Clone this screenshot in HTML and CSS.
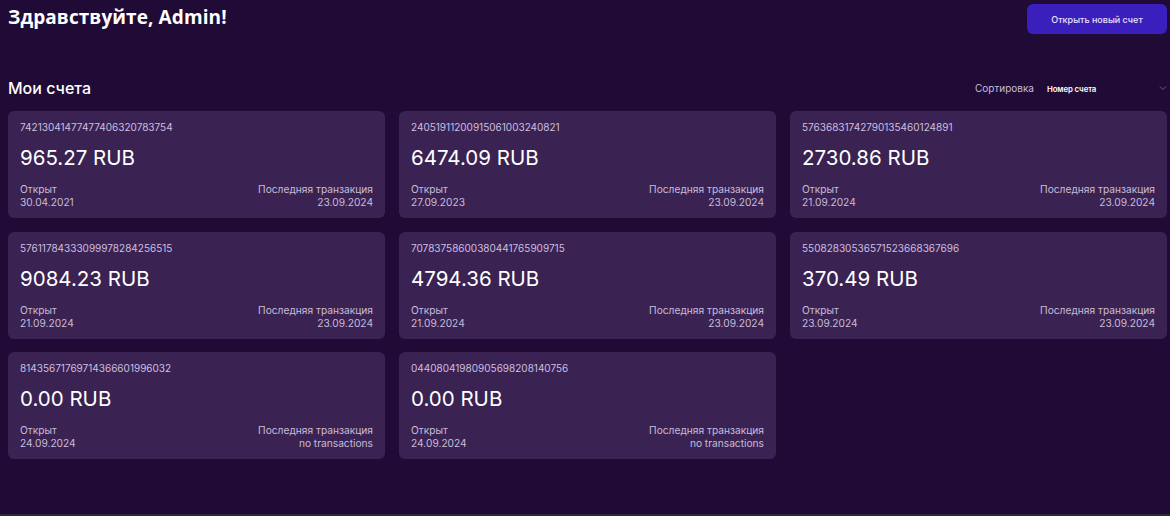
FILE: index.html
```html
<!DOCTYPE html>
<html lang="ru">
<head>
<meta charset="utf-8">
<title>Счета</title>
<link rel="stylesheet" href="styles.css">
</head>
<body>
<div class="page">
  <header class="top">
    <h1 class="greet">Здравствуйте, Admin!</h1>
    <button class="btn-new">Открыть новый счет</button>
  </header>
  <div class="section-head">
    <h2 class="section-title">Мои счета</h2>
    <div class="sort">
      <span class="sort-label">Сортировка</span>
      <span class="sort-value">Номер счета</span>
      <svg class="chev" width="8" height="6" viewBox="0 0 8 6"><path d="M1 1.5 L4 4.5 L7 1.5" fill="none" stroke="#6d5a85" stroke-width="1"/></svg>
    </div>
  </div>
  <div class="grid">
    <div class="card"><div class="num">74213041477477406320783754</div><div class="amt">965.27 RUB</div><div class="meta"><div><div>Открыт</div><div>30.04.2021</div></div><div class="r"><div>Последняя транзакция</div><div>23.09.2024</div></div></div></div>
    <div class="card"><div class="num">24051911200915061003240821</div><div class="amt">6474.09 RUB</div><div class="meta"><div><div>Открыт</div><div>27.09.2023</div></div><div class="r"><div>Последняя транзакция</div><div>23.09.2024</div></div></div></div>
    <div class="card"><div class="num">57636831742790135460124891</div><div class="amt">2730.86 RUB</div><div class="meta"><div><div>Открыт</div><div>21.09.2024</div></div><div class="r"><div>Последняя транзакция</div><div>23.09.2024</div></div></div></div>
    <div class="card"><div class="num">57611784333099978284256515</div><div class="amt">9084.23 RUB</div><div class="meta"><div><div>Открыт</div><div>21.09.2024</div></div><div class="r"><div>Последняя транзакция</div><div>23.09.2024</div></div></div></div>
    <div class="card"><div class="num">70783758600380441765909715</div><div class="amt">4794.36 RUB</div><div class="meta"><div><div>Открыт</div><div>21.09.2024</div></div><div class="r"><div>Последняя транзакция</div><div>23.09.2024</div></div></div></div>
    <div class="card"><div class="num">55082830536571523668367696</div><div class="amt">370.49 RUB</div><div class="meta"><div><div>Открыт</div><div>23.09.2024</div></div><div class="r"><div>Последняя транзакция</div><div>23.09.2024</div></div></div></div>
    <div class="card"><div class="num">81435671769714366601996032</div><div class="amt">0.00 RUB</div><div class="meta"><div><div>Открыт</div><div>24.09.2024</div></div><div class="r"><div>Последняя транзакция</div><div>no transactions</div></div></div></div>
    <div class="card"><div class="num">04408041980905698208140756</div><div class="amt">0.00 RUB</div><div class="meta"><div><div>Открыт</div><div>24.09.2024</div></div><div class="r"><div>Последняя транзакция</div><div>no transactions</div></div></div></div>
  </div>
</div>
</body>
</html>
```
FILE: styles.css
```css
html, body {
  margin: 0;
  padding: 0;
  height: 100%;
}
body {
  background: #200b36;
  font-family: "Inter", "Noto Sans", sans-serif;
  color: #fff;
  box-sizing: border-box;
  border-bottom: 2px solid #2b2b2b;
}
.page {
  padding: 4px 3px 0 8px;
}
.top {
  display: flex;
  justify-content: space-between;
  align-items: flex-start;
}
.greet {
  margin: 1px 0 0 0;
  font-size: 19px;
  font-weight: 700;
  line-height: 24px;
  font-family: "Open Sans", "Noto Sans", sans-serif;
  letter-spacing: 0.1px;
}
.btn-new {
  width: 140px;
  height: 30px;
  background: #3b1fbd;
  color: #e6e0ff;
  border: none;
  border-radius: 6px;
  font-family: "Inter", sans-serif;
  font-size: 9px;
  font-weight: 500;
  cursor: pointer;
}
.section-head {
  display: flex;
  justify-content: space-between;
  align-items: center;
  margin-top: 41px;
  height: 26px;
}
.section-title {
  margin: 0;
  font-size: 16px;
  font-weight: 500;
  line-height: 20px;
}
.sort {
  display: flex;
  align-items: center;
  font-size: 10px;
  width: 192px;
}
.sort-label {
  color: #c9bcd9;
  margin-right: 13px;
}
.sort-value {
  color: #fff;
  font-weight: 600;
  font-size: 7.8px;
  letter-spacing: -0.1px;
  flex: 1;
  padding-top: 2px;
}
.grid {
  display: grid;
  grid-template-columns: repeat(3, 377px);
  column-gap: 14px;
  row-gap: 13.5px;
  margin-top: 10px;
}
.card {
  background: #3a2352;
  border-radius: 6px;
  height: 107px;
  box-sizing: border-box;
  padding: 10px 12px 0 12px;
  display: flex;
  flex-direction: column;
}
.num {
  font-size: 10px;
  color: #cdbfe0;
  line-height: 13px;
}
.amt {
  font-size: 20.5px;
  line-height: 24px;
  margin-top: 12px;
  color: #fff;
}
.meta {
  display: flex;
  justify-content: space-between;
  margin-top: 13px;
  font-size: 10.2px;
  line-height: 13px;
  color: #c9bcd9;
}
.meta .r {
  text-align: right;
}
```
